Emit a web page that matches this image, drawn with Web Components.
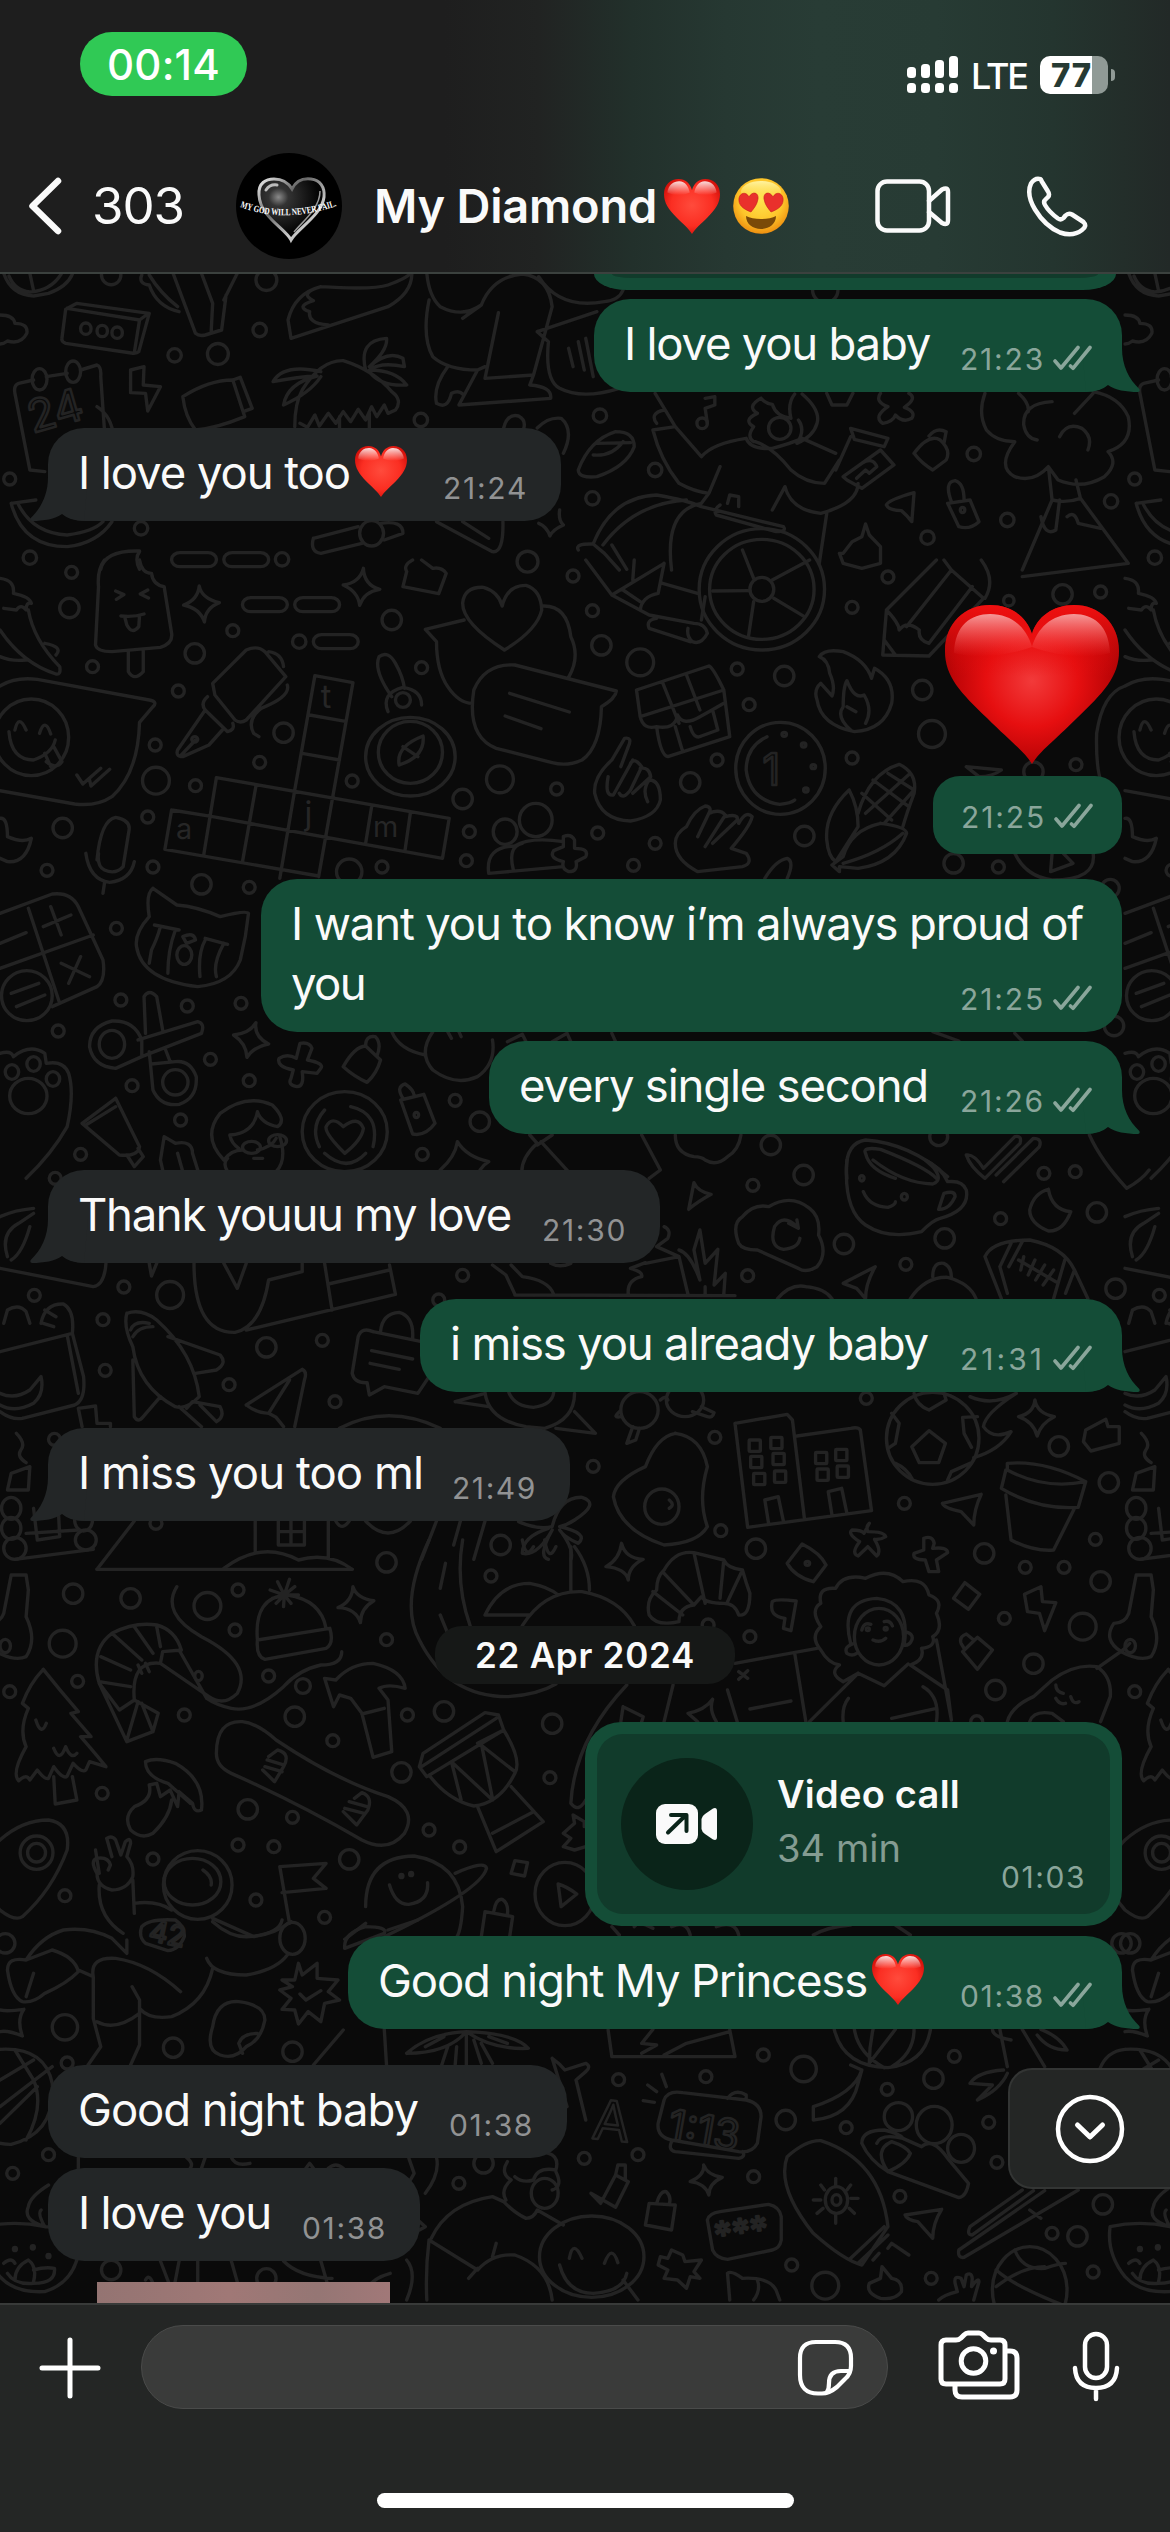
<!DOCTYPE html>
<html lang="en">
<head>
<meta charset="utf-8">
<title>Chat</title>
<style>
html,body{margin:0;padding:0;background:#0a0a0a}
body{width:1170px;height:2532px;overflow:hidden;font-family:Inter,"Liberation Sans",sans-serif}
</style>
</head>
<body>
<chat-screen></chat-screen>
<script>
const define = (name, html, setup) => {
  const t = document.createElement('template');
  t.innerHTML = html;
  customElements.define(name, class extends HTMLElement {
    constructor() {
      super();
      this.attachShadow({mode: 'open'}).appendChild(t.content.cloneNode(true));
    }
    connectedCallback() { if (setup) setup(this, this.shadowRoot); }
  });
};

/* Text run tracked so that it spans a given advance width */
define('fit-text', `<style>:host{display:inline-block;white-space:nowrap}span{white-space:pre}</style><span><slot></slot></span>`, (el, root) => {
  const s = root.querySelector('span'), w = +el.getAttribute('w');
  if (!w) return;
  s.style.letterSpacing = '0px';
  const n = el.textContent.length, cur = s.getBoundingClientRect().width;
  if (cur) s.style.letterSpacing = ((w - cur) / n) + 'px';
});

define('heart-emoji', `<style>:host{display:inline-block;width:52px;height:51px}svg{display:block;width:100%;height:100%}</style>
<svg viewBox="0 0 100 98" preserveAspectRatio="none" role="img" aria-label="heart">
<defs>
<radialGradient id="g" cx=".5" cy=".48" r=".6"><stop offset="0" stop-color="#ff4b3c"/><stop offset=".62" stop-color="#fb2e22"/><stop offset="1" stop-color="#cf0d08"/></radialGradient>
<linearGradient id="h" x1="0" y1="0" x2="0" y2="1"><stop offset="0" stop-color="#fff" stop-opacity=".85"/><stop offset="1" stop-color="#fff" stop-opacity="0"/></linearGradient></defs>
<path fill="url(#g)" d="M50 98C44 88 34 80 22 68C8 54 0 42 0 27C0 10 12 0 26 0C38 0 47 8 50 20C53 8 62 0 74 0C88 0 100 10 100 27C100 42 92 54 78 68C66 80 56 88 50 98Z"/>
<path fill="url(#h)" d="M6 24C8 10 17 4 27 4C38 4 44 14 46 24C34 30 18 30 6 24ZM54 24C56 14 62 4 73 4C83 4 92 10 94 24C82 30 66 30 54 24Z"/>
</svg>`);

define('big-heart', `<style>:host{display:block;width:174px;height:159px}svg{display:block}</style>
<svg width="174" height="159" viewBox="0 0 174 159" role="img" aria-label="heart">
<defs><radialGradient id="g" cx="87" cy="76" r="92" gradientUnits="userSpaceOnUse"><stop offset="0" stop-color="#f23a3a"/><stop offset=".5" stop-color="#e60f10"/><stop offset=".85" stop-color="#bd0507"/><stop offset="1" stop-color="#a00304"/></radialGradient>
<linearGradient id="t" x1="0" y1="0" x2="0" y2="1"><stop offset="0" stop-color="#f01010"/><stop offset=".45" stop-color="#e80e0e" stop-opacity="0"/></linearGradient>
<linearGradient id="h" x1="0" y1="0" x2="0" y2="1"><stop offset="0" stop-color="#f5a0a0" stop-opacity=".95"/><stop offset="1" stop-color="#f55" stop-opacity="0"/></linearGradient></defs>
<path id="p" fill="url(#g)" d="M87 159C78 145 66 137 42 113C16 88 0 72 0 46C0 18 20 0 45 0C66 0 82 12 87 29C92 12 108 0 129 0C154 0 174 18 174 46C174 72 158 88 132 113C108 137 96 145 87 159Z"/>
<path fill="url(#t)" d="M87 159C78 145 66 137 42 113C16 88 0 72 0 46C0 18 20 0 45 0C66 0 82 12 87 29C92 12 108 0 129 0C154 0 174 18 174 46C174 72 158 88 132 113C108 137 96 145 87 159Z"/>
<path fill="url(#h)" d="M9 48C10 20 26 9 45 9C68 9 82 24 87 42C92 24 106 9 129 9C148 9 164 20 165 48C140 55 110 50 87 42C64 50 34 55 9 48Z"/></svg>`);

define('love-face', `<style>:host{display:block;width:56px;height:56px}svg{display:block}</style>
<svg width="56" height="56" viewBox="0 0 56 56" role="img" aria-label="smiling face with heart eyes">
<defs><radialGradient id="f" cx=".5" cy=".4" r=".6"><stop offset="0" stop-color="#ffe34d"/><stop offset=".65" stop-color="#fdc52a"/><stop offset="1" stop-color="#ee8f10"/></radialGradient>
<linearGradient id="s" x1="0" y1="0" x2="0" y2="1"><stop offset="0" stop-color="#fff3a0"/><stop offset="1" stop-color="#ffe34d" stop-opacity="0"/></linearGradient></defs>
<circle cx="28" cy="28" r="27.8" fill="url(#f)"/><ellipse cx="28" cy="14" rx="20" ry="11" fill="url(#s)"/>
<path fill="#e9302c" stroke="#c41d1d" stroke-width=".6" d="M18 34C10 31 5 27 6 20C7 15 13 13 16 19C19 13 26 14 25 21C24 27 21 30 18 34ZM38 34C35 30 32 27 31 21C30 14 37 13 40 19C43 13 49 15 50 20C51 27 46 31 38 34Z"/>
<path fill="#7a4a08" d="M13 38C20 42 36 42 43 38C43 46 36 51 28 51C20 51 13 46 13 38Z"/></svg>`);

define('read-ticks', `<style>:host{display:block;width:39px;height:26px}svg{display:block}</style>
<svg width="39" height="26" viewBox="0 0 39 26" fill="none" stroke="#8aa69b" stroke-width="3.6" stroke-linecap="round" stroke-linejoin="round"><path d="M2 16L8 23L25 2.5M17.5 21L20 23.3L37 2.5"/></svg>`);

define('time-stamp', `<style>:host{display:flex;align-items:flex-end;gap:8px;height:30px;font-size:30px;line-height:30px;color:#919293}
:host([sent]){color:#8aa69b}read-ticks{display:none;margin-bottom:3px}:host([sent]) read-ticks{display:block}</style>
<fit-text id="f"></fit-text><read-ticks></read-ticks>`, (el, root) => {
  const old = root.getElementById('f'), f = document.createElement('fit-text');
  f.textContent = el.getAttribute('value');
  f.setAttribute('w', el.getAttribute('w') || '85');
  old.replaceWith(f);
});

define('chat-bubble', `<style>
:host{display:block;flex:none;box-sizing:border-box;position:relative;isolation:isolate;align-self:flex-start;margin-left:48px;background:#232627;color:#fafafa;border-radius:36px;padding:14.5px 33px 18.5px 30px;font-size:45.5px;line-height:60px;--c:#232627;margin-top:36px}
:host([sent]){align-self:flex-end;margin-left:0;margin-right:48px;background:#144d37;--c:#144d37;padding-right:30px}
:host([near]){margin-top:9px}
.row{display:flex;justify-content:space-between;align-items:flex-end}
.body{display:flex;align-items:center;flex:1 1 0;min-width:0}
:host([lines]) .body{flex-direction:column;align-items:flex-start}
.tail{display:none;position:absolute;z-index:-1;bottom:0;right:-18px;width:58px;height:44px;fill:var(--c)}
:host([tail]) .tail{display:block}
:host(:not([sent])) .tail{right:auto;left:-18px;transform:scaleX(-1)}
</style><svg class="tail" viewBox="-40 -44 58 44"><path d="M-40-44H0C0-26 7-13 17.300-3Q18.500-0.500 16 0C4 0-7-2-14-7Q-22 0-36 0Z"/></svg>
<div class="row"><div class="body"><slot></slot></div><time-stamp></time-stamp></div>`, (el, root) => {
  el.style.width = el.getAttribute('w') + 'px';
  const t = document.createElement('time-stamp');
  t.setAttribute('value', el.getAttribute('time'));
  if (el.hasAttribute('sent')) t.setAttribute('sent', '');
  root.querySelector('time-stamp').replaceWith(t);
});

define('time-pill', `<style>:host{display:flex;box-sizing:border-box;flex:none;align-self:flex-end;margin:12px 48px 0 0;width:189px;height:78px;border-radius:27px;background:#144d37;padding:26px 0 0 28px}</style><time-stamp value="21:25" sent></time-stamp>`);

define('date-chip', `<style>:host{display:flex;flex:none;align-self:center;align-items:center;justify-content:center;width:300px;height:58px;margin-top:105px;border-radius:27px;background:#161817;color:#fafafa;font-size:35px;font-weight:600}</style><slot></slot>`);

define('call-card', `<style>
:host{display:flex;flex:none;box-sizing:border-box;align-self:flex-end;width:537px;height:204px;margin:38px 48px 0 0;background:#144d37;border-radius:36px;padding:12px}
.in{display:flex;flex:1;background:#113b2b;border-radius:26px;align-items:center;padding-left:24px}
.c{width:132px;height:132px;border-radius:50%;background:#0a2419;display:flex;align-items:center;justify-content:center}
.t{margin-left:24px;display:flex;flex-direction:column;align-self:flex-start;padding-top:33px;gap:0}
.a{font-size:38px;line-height:54px;font-weight:600;color:#fafafa}.b{font-size:38px;line-height:54px;color:#849c92}
time-stamp{align-self:flex-end;margin:0 24px 22px auto;}
</style><div class="in"><div class="c"><svg width="62" height="42" viewBox="0 0 62 42"><rect x="0" y="1" width="42" height="40" rx="9" fill="#fafafa"/><path d="M45.500 16Q46 13 49 11L57 5.500Q61 4 61 8V34Q61 38 57 36.500L49 31Q46 29 45.500 26Z" fill="#fafafa"/><path d="M12 29.500L29.500 12.500M15 12H30.500V28" fill="none" stroke="#0a2419" stroke-width="4" stroke-linecap="round" stroke-linejoin="round"/></svg></div>
<div class="t"><div class="a"><fit-text w="183">Video call</fit-text></div><div class="b"><fit-text w="124">34 min</fit-text></div></div><time-stamp value="01:03" sent></time-stamp></div>`, (el, root) => {
  root.querySelector('time-stamp').shadowRoot.querySelector('read-ticks').remove();
});

define('scroll-down', `<style>:host{position:absolute;right:0;top:1794px;width:162px;height:121px;box-sizing:border-box;background:#242625;border:2px solid #333534;border-right:0;border-radius:24px 0 0 24px;display:flex;align-items:center;padding-left:45px}</style>
<svg width="70" height="70" viewBox="0 0 70 70" fill="none" stroke="#fff" stroke-linecap="round" stroke-linejoin="round"><circle cx="35" cy="35" r="32" stroke-width="4.500"/><path d="M22.500 31L35 43L47.500 31" stroke-width="5"/></svg>`);

define('status-bar', `<style>
:host{display:flex;align-items:flex-start;height:153px;box-sizing:border-box;padding-left:80px;color:#fff}
.clock{margin-top:32px;width:167px;height:64px;border-radius:32px;background:#30c955;display:flex;align-items:center;justify-content:center;font-size:42px;font-weight:500}
.r{margin:55px 0 0 660px;display:flex;align-items:center;height:39px}
.bars{display:block}.lte{font-size:36px;margin:3px 0 0 13px;line-height:36px;font-weight:500}
.bat{margin-left:13px;width:68px;height:38px;border-radius:10px;background:linear-gradient(90deg,#fff 52px,#909a96 52px);color:#263a33;font-size:33px;font-weight:800;display:flex;align-items:center;padding-left:11px;box-sizing:border-box}
.nub{width:4px;height:12px;margin-left:3px;background:#909a96;border-radius:0 4px 4px 0}
</style><div class="clock"><fit-text w="113">00:14</fit-text></div>
<div class="r"><svg class="bars" width="51" height="39" viewBox="0 0 51 39" fill="#fff"><rect x="0" y="12" width="9" height="11" rx="3.500"/><rect x="14" y="9" width="9" height="14" rx="3.500"/><rect x="28" y="5" width="9" height="18" rx="3.500"/><rect x="42" y="1" width="9" height="22" rx="3.500"/><rect x="0" y="28" width="9" height="10" rx="3.500"/><rect x="14" y="28" width="9" height="10" rx="3.500"/><rect x="28" y="28" width="9" height="10" rx="3.500"/><rect x="42" y="28" width="9" height="10" rx="3.500"/></svg>
<div class="lte"><fit-text w="56">LTE</fit-text></div><div class="bat"><fit-text w="41">77</fit-text></div><div class="nub"></div></div>`);

define('chat-avatar', `<style>:host{display:block;width:106px;height:106px}svg{display:block}text{font:bold 9.500px "Liberation Serif",serif;fill:#fff}</style>
<svg width="106" height="106" viewBox="0 0 106 106"><defs><radialGradient id="r" cx=".3" cy=".3" r=".6"><stop offset="0" stop-color="#8a8a8a"/><stop offset=".25" stop-color="#333"/><stop offset="1" stop-color="#050505"/></radialGradient>
<linearGradient id="l" x1="0" y1="0" x2="1" y2="1"><stop offset="0" stop-color="#eee"/><stop offset=".35" stop-color="#666"/><stop offset=".7" stop-color="#ccc"/><stop offset="1" stop-color="#999"/></linearGradient><path id="c" d="M4 54Q50 72 106 51"/></defs>
<circle cx="53" cy="53" r="53" fill="#000"/>
<path d="M55 87C50 76 24 64 23 42C22 30 30 26 38 26C47 26 53 31 56 36C60 28 67 25 75 26C84 27 89 34 88 44C86 62 61 76 55 87Z" fill="url(#r)" stroke="url(#l)" stroke-width="3"/>
<path d="M84 38C84 55 68 67 58 79" fill="none" stroke="#999" stroke-width="1.500"/><path d="M30 37Q34 31 41 32" fill="none" stroke="#bbb" stroke-width="3" stroke-linecap="round"/>
<text textLength="99" lengthAdjust="spacingAndGlyphs"><textPath href="#c" textLength="99" lengthAdjust="spacingAndGlyphs">MY GOD WILL NEVER FAIL.</textPath></text></svg>`);

define('chat-header', `<style>
:host{display:block;box-sizing:border-box;height:274px;border-bottom:2px solid #3b413e;background:linear-gradient(90deg,#1e1e1e 0,#1e1e1e 38%,#212322 46%,#22302b 54%,#263832 62%,#283c35 70%,#273b34 80%,#24352f 90%,#232e2a 96%,#222927 100%)}
.row{display:flex;align-items:center;height:106px;color:#fafafa}
.n{font-size:51px;line-height:56px;margin-left:30px;width:92px}
chat-avatar{margin-left:52px}
.name{font-size:47px;font-weight:600;line-height:56px;margin-left:32px}
heart-emoji{width:56px;height:55px;margin-left:7px}love-face{margin-left:13px}
.v{margin-left:85px}.p{margin-left:74px}
svg{display:block;fill:none;stroke:#fafafa;stroke-linejoin:round;stroke-linecap:round}
</style><status-bar></status-bar><div class="row">
<svg style="margin-left:28px" width="34" height="58" viewBox="0 0 34 58" stroke-width="6.500"><path d="M30 4L4.500 29L30 54"/></svg>
<div class="n"><fit-text w="92">303</fit-text></div><chat-avatar></chat-avatar>
<div class="name"><fit-text w="283">My Diamond</fit-text></div><heart-emoji></heart-emoji><love-face></love-face>
<svg class="v" width="78" height="54" viewBox="0 0 78 54" stroke-width="4.500"><rect x="3.500" y="2.500" width="51.500" height="49" rx="9.500"/><path d="M55 22L68 10.500Q74 7.500 74 13V41Q74 47 68 44L55 33"/></svg>
<svg class="p" width="62" height="62" viewBox="0 0 62 62" stroke-width="4.500"><path d="M14.500 4.200Q9 2.500 5 8.500Q0 19 9 34.500Q19 51 34 57.500Q47 62 56 55Q61.500 51 57.500 47L46 39.500Q42.500 37.500 39.500 40.500L37.500 43Q35 45.500 32 43.500Q23 37 19 30Q17 26.500 19.500 24.500L22 22Q24 19.500 22 16.500L15.500 6Q15 4.500 14.500 4.200Z"/></svg></div>`);

define('message-composer', `<style>
:host{display:flex;align-items:flex-start;box-sizing:border-box;height:229px;background:#242625;border-top:2px solid #383a39;position:relative}
svg{display:block;fill:none;stroke:#fff;stroke-linecap:round;stroke-linejoin:round;flex:none}
.plus{margin:32px 0 0 39px}.field{box-sizing:border-box;margin:20px 0 0 40px;width:747px;height:84px;border-radius:42px;border:1.500px solid #4a4b4a;background:#3a3b3a;display:flex;justify-content:flex-end;align-items:center;padding-right:33px}
.cam{margin:24px 0 0 50px}.mic{margin:25px 0 0 51px}
.home{position:absolute;left:377px;top:188px;width:417px;height:15px;border-radius:8px;background:#fff}
</style>
<svg class="plus" width="62" height="62" viewBox="0 0 62 62" stroke-width="5"><path d="M31 3V59M3 31H59"/></svg>
<div class="field"><svg width="57" height="57" viewBox="0 0 57 57" stroke-width="4.200"><path d="M19 3H38Q54 3 54 19V27Q54 35 48 40L40 48Q32 54.500 25 54.500H21Q3 54.500 3 36V19Q3 3 19 3Z"/><path d="M53 32H44Q32 32 32 44Q32 50 30 53"/></svg></div>
<svg class="cam" width="82" height="72" viewBox="0 0 82 72" stroke-width="5"><path d="M8 11H18Q21 11 23 9L26 6Q28 4 30 4H41Q43 4 45 6L48 9Q50 11 53 11H62Q67 11 67 16V50Q67 55 62 55H8Q3 55 3 50V16Q3 11 8 11Z"/><circle cx="35.500" cy="32" r="12.300"/><circle cx="55.500" cy="22" r="3.500" fill="#fff" stroke="none"/><path stroke-linecap="butt" d="M68 22H72Q79 22 79 29V61Q79 68 72 68H24Q17 68 17 61V56"/></svg>
<svg class="mic" width="50" height="72" viewBox="0 0 50 72" stroke-width="4.500"><rect x="14" y="4" width="22" height="44" rx="11"/><path d="M4 38Q5 58 25 58Q45 58 46 38M25 58V69"/></svg>
<div class="home"></div>`);

/* Doodle wallpaper: hand-drawn line art in horizontal bands, each band on its own stretched grid, repeated every 1125px */
const bands = [
{y:270, e:[[115,176,7,17],[137,183,7,17],[157,188,7,17],[53,328,10,32],[98,305,10,32],[941,460,7,16],[1045,475,15,33],[498,790,16,38],[1290,720,3,8]],
 r:[[230,848,60,42],[300,848,60,42]], t:[['24',44,490,62,1.2,-16]],
 d:[[357,30,14],[348,180,9],[234,256,9],[292,252,14],[149,15,13],[804,437,9],[564,450,9],[1305,552,9],[878,600,9],[794,685,9],[189,775,9],[13,627,8],[40,863,9],[378,868,9],[707,875,14],[1489,694,9],[1350,750,9],[1243,803,9],[1106,60,17]],
 p:`M5 10Q15 75 45 78L65 70Q90 50 97 12M12 18Q20 62 40 66Q68 62 82 12M40 10L45 62
M88 118L103 100L200 130L186 245Q183 252 176 249L88 220Q82 215 83 205ZM90 115L187 150L198 132M187 150L180 248
M0 135Q18 135 20 160Q38 160 36 190Q28 225 10 213Q5 222 0 222
M232 10L262 190Q267 200 275 195L297 180L303 75M270 10L285 100L283 185M190 15Q185 40 200 45Q210 110 240 125M200 15Q215 70 238 110M318 10L300 90
M390 205L386 150Q395 70 430 50Q500 60 520 45Q545 25 550 10M390 205L520 110Q552 70 552 10M430 50Q400 70 420 92Q395 110 415 125Q412 160 440 165
M572 10Q575 80 590 110Q620 145 645 105Q660 20 700 12Q735 20 740 110L715 315L650 325L668 128M645 105L620 145M575 90Q565 200 580 260Q600 300 640 300L650 290M715 315L710 345Q740 350 738 385L615 405L640 300M600 290Q580 350 585 400Q600 420 605 370Q615 360 620 372M722 20Q750 120 810 95Q830 90 835 60M720 185L800 125M720 185L735 215Q730 330 750 355Q780 390 830 355M762 235L768 290M775 215L783 300M785 205L795 320
M395 470Q395 400 405 360Q430 270 460 272Q500 300 525 365Q540 390 530 420L520 430L515 405L505 440L498 410L490 450L480 418L470 455L460 425L450 460L440 430L428 468L422 435L412 472L402 460M490 300Q480 210 518 205Q520 240 495 290Q520 240 540 265L542 290Q510 275 495 300Q530 300 545 345Q510 350 495 305M430 305Q380 280 366 335Q400 320 425 318Q385 340 380 405Q415 370 430 320M455 440V474M495 430V474
M20 370Q18 345 25 340L45 330M62 320L90 310M108 300L130 285Q136 290 135 320L140 480M20 370L40 600L60 605M130 410Q150 440 152 500
M175 300L193 290L192 345L215 350L198 423L195 370L175 368Z
M245 380Q280 330 312 330L328 440Q290 475 262 480Q248 440 245 380ZM312 330L322 322L338 415L326 425M945 385L958 380V405L945 415L948 460
M1108 370L1115 405H1135L1143 370M1180 370Q1172 395 1190 410Q1170 440 1183 460Q1197 455 1200 435Q1210 460 1222 445Q1228 425 1212 412Q1230 385 1218 370
M878 370L905 470L940 560Q955 520 1000 505Q1005 540 1035 535Q1060 520 1075 505L1120 550M905 470L875 480Q885 570 910 640Q930 665 950 670L965 590M950 670L940 700M1012 515Q1035 530 1060 600Q1080 640 1105 640L1125 570M1052 650Q1060 720 1100 730Q1150 700 1150 640M1052 650L1035 720M1020 385Q1000 410 1015 430Q995 450 1010 470Q1000 500 1010 515M1020 385Q1025 400 1035 403Q1040 440 1060 445Q1055 400 1065 372M1075 372Q1100 420 1095 460Q1090 500 1068 520Q1080 480 1070 450M880 460Q870 430 890 420
M1130 620L1180 540L1198 585L1155 655L1135 630ZM1140 475L1190 505L1185 530L1145 508ZM1140 500L1120 600M1155 580Q1170 560 1175 590L1165 610L1160 600L1148 625
M1225 550Q1245 490 1260 510Q1275 540 1268 570L1250 600Q1235 580 1225 550M1245 498Q1255 470 1268 485L1265 520
M1320 370Q1310 430 1322 480Q1335 515 1360 515Q1335 590 1360 620Q1385 640 1405 590L1418 630Q1450 660 1480 620Q1500 580 1485 545Q1520 520 1512 440Q1500 380 1465 365M1410 395Q1370 400 1372 465Q1375 505 1390 510M1365 370Q1380 400 1378 425M1465 370L1440 430M1420 500Q1430 455 1450 475Q1465 500 1458 540M1405 590L1410 690Q1430 700 1448 685L1442 630M1410 690L1370 900M1448 685L1512 880L1370 920M1395 740Q1400 800 1415 780L1420 690M1430 740Q1440 720 1445 760L1475 775
M1270 700L1300 690L1312 755Q1300 780 1285 770ZM1275 695Q1265 635 1280 632Q1292 640 1292 690M1188 705Q1190 690 1225 668L1222 755Q1215 735 1208 722Q1190 720 1188 705
M775 840Q770 820 795 822L810 850L830 900M795 822Q820 680 880 675Q920 690 940 710L1050 770Q1055 785 1040 785L960 735Q955 720 965 705M808 825Q850 700 920 690M900 900Q890 720 940 700M820 825L840 898M975 700L978 675L990 680V710M1108 730L1098 880
M775 600Q790 510 825 485Q850 485 850 530Q840 590 800 620Q775 625 775 600M800 520L845 518M795 555Q820 560 835 515
M675 474Q680 430 695 438Q705 450 702 474M720 474Q735 440 752 445Q770 480 755 550M15 700L48 690M15 700Q30 830 90 830Q130 820 150 755M25 705Q45 790 90 795Q125 785 138 755
M420 805L480 770M430 850L485 820M420 805Q415 845 430 850M510 760Q540 750 540 790L515 810M585 755L660 845Q675 850 674 755M620 755L655 805M750 720Q748 750 755 765Q740 780 737 798Q733 770 722 760
M187 845Q180 865 187 898M187 843Q140 840 135 898M1130 850L1142 815L1155 800L1160 762L1165 795L1180 830V880L1155 895L1130 880L1125 850Z`},
{y:560, e:[[1021,88,84,182],[1021,88,70,150],[1021,88,16,36],[42,532,50,115],[261,538,4,8],[550,590,60,118],[550,577,43,93],[540,420,10,22],[1046,625,60,138],[1051,523,3,6],[1077,555,3,6],[1090,620,3,6],[1080,690,3,6],[677,815,16,38],[718,780,22,50]],
 r:[[325,113,60,42],[395,113,60,42],[420,224,60,42]],
 t:[['t',430,445,45],['j',408,795,45],['m',500,830,40],['a',236,838,40],['1',1022,675,60,1.2,0]],
 d:[[96,37,8],[93,144,13],[124,320,8],[261,280,13],[312,212,8],[239,393,8],[525,180,13],[401,245,9],[565,323,8],[380,518,13],[208,555,8],[348,607,8],[209,662,18],[262,677,8],[472,663,8],[198,771,8],[84,804,13],[63,931,8],[205,921,8],[468,935,17],[512,921,8],[768,48,8],[794,152,8],[806,256,13],[858,307,18],[988,327,8],[1004,434,8],[1051,348,13],[1142,142,8],[1190,51,8],[1236,390,13],[1249,522,18],[1142,594,8],[961,600,8],[925,667,13],[746,687,8],[670,658,18],[620,717,13],[629,815,8],[625,902,8],[801,819,8],[878,850,8],[849,916,8],[1078,828,13],[1352,122,7],[1424,103,13],[1475,96,8],[1385,635,13],[1442,614,8],[1278,910,13],[1338,921,8]],
 p:`M955 93L1005 92M1035 60L1085 0M1010 55L995-30M1010 125L1003 230M1037 115L1078 170M785 0L820 105L870 165L930 190M890 10L820 105M850 0L848 60M890 10L882 100Q860 110 858 150M888 70L935 100M880 175Q865 180 870 205L925 245M835 90L858 125M945 110L940 180M930 190Q945 190 948 220Q940 255 928 245Q920 230 922 205
M140 0Q130 30 132 80L128 255Q130 275 150 275L215 262Q232 250 230 220L220 80Q205 75 203 40Q190 40 187 0M172 272V335Q180 365 192 335V268M155 93L166 104L156 118M198 90L188 102L199 114M162 168Q180 172 193 162M167 170L170 195Q177 225 186 200L187 167
M267 78Q270 115 294 128Q275 145 274 186Q268 145 246 135Q265 120 267 78ZM487 25Q488 75 509 88Q488 95 482 136Q480 95 460 75Q482 68 487 25ZM545 35Q540 15 553 0M545 35L540 80L588 101L598 40Q592 20 580 25L565 0
M676 270Q620 190 620 130Q622 80 648 82Q668 95 673 138Q680 75 705 76Q725 90 726 150Q720 210 676 270ZM622 180L570 208L585 245Q585 330 600 380Q615 430 633 430M727 138Q760 135 765 230Q778 290 762 352M635 390Q650 310 690 315L826 393Q825 415 806 440Q805 560 780 600Q760 620 740 608L665 565Q625 530 635 390ZM683 400L763 456M677 468L725 506
M0 55Q20 60 18 100Q40 110 42 130Q35 125 35 150Q28 130 22 150L5 145M38 150Q45 240 80 320Q82 345 75 342Q30 310 0 210M0 290Q15 305 35 300M60 250Q85 260 75 285
M0 378Q20 350 50 358L200 420Q212 425 205 440L187 487Q185 640 150 710Q130 740 100 732L0 692M-20 700Q-40 680-38 520Q-30 400 0 378M12 515Q15 600 45 600Q70 580 74 540M20 510Q25 460 35 510M53 520Q60 470 68 522M60 580L68 620M72 560L83 605Q75 630 62 605M103 645L111 672L135 625M120 660L122 678L147 628
M285 370L330 270Q345 255 355 275L383 350L330 480Q322 492 315 480L288 405ZM360 275Q378 280 380 320M385 375Q390 410 350 445Q330 480 340 520L347 530M278 410Q268 430 275 450L305 515Q315 510 312 490M275 450L238 570Q235 590 245 590L280 555L298 510M243 585L262 540
M422 347L473 368L427 950M422 347L395 690L375 955M415 465L463 484M405 580L455 600M290 653L602 775L593 895L285 770M290 653L273 885M230 750L285 770M230 750L221 868L427 948M343 678L325 905M498 740L490 850M550 758L543 868
M520 455Q510 400 540 382Q565 390 565 435M525 410Q500 330 508 290Q520 270 530 310Q540 350 542 385M535 615Q530 560 567 528Q570 590 535 615M540 560L560 590
M853 390L950 318Q955 320 970 390L978 530L895 590Q885 585 880 500Q862 510 858 470ZM858 470L970 390M888 368L910 490M920 345L938 450M880 500Q905 510 908 465Q915 500 938 470Q955 450 970 430M925 500Q930 540 940 528L962 510L955 450M905 500L915 575
M1098 290Q1105 265 1130 275Q1160 300 1168 355L1172 325Q1200 360 1195 430Q1185 510 1145 515Q1100 495 1095 420Q1090 390 1100 370L1115 408Q1120 380 1112 340Q1110 300 1098 290M1140 510Q1120 470 1130 440Q1130 380 1135 362Q1145 420 1158 405Q1170 450 1160 490M1135 440L1147 455
M1188 150L1255 0M1215 200L1275 30L1318 115L1245 288L1183 285L1188 150Q1205 190 1205 210Q1215 180 1232 210Q1230 240 1245 250M1185 240L1200 285M1245 250L1303 80M1265 0L1275 30M1320 115Q1335 60 1315 0
M1028 530Q1000 560 1000 630Q1005 720 1045 733Q1060 730 1065 720M820 600L837 535Q848 530 842 560L832 620M820 600Q795 650 797 700Q805 780 845 783Q880 770 885 720Q885 660 870 660Q860 690 868 725M815 650Q810 710 822 705L848 600M830 700Q835 720 845 690L860 620Q850 590 845 610M848 700L872 650Q870 620 858 625
M920 800Q930 750 945 738Q955 740 950 760L935 830M950 760Q965 745 972 765L945 860M972 770Q990 760 988 780L955 850M990 790Q1000 750 1008 770Q1005 800 980 865L1000 880Q1010 910 995 920L935 935Q905 900 905 850Q905 820 920 800
M655 940Q650 860 690 858Q710 830 755 845M655 940L755 920M688 930Q680 860 700 850M755 830Q765 820 770 840V865Q790 865 785 890L772 905Q775 935 762 935Q752 925 755 905Q735 895 742 872L755 860Z
M1138 690Q1105 760 1108 840Q1110 890 1120 905L1150 800Q1150 740 1138 690M1150 760Q1165 640 1205 613Q1230 640 1225 700Q1215 760 1210 800M1180 790Q1215 800 1215 820Q1200 910 1150 925L1125 920V935L1115 915L1130 890Q1140 810 1180 790M1130 910Q1180 880 1210 820M1155 700L1195 780M1170 660L1218 740M1190 640L1225 690M1220 640L1160 760M1225 690L1185 790
M1295 620L1342 630Q1330 650 1312 650ZM0 775Q10 770 10 830Q30 850 42 835Q35 910 10 905L0 895M130 900Q135 780 155 772Q175 780 173 810L165 920Q155 945 140 930Q130 920 132 880M115 880Q120 960 147 967Q175 960 180 905M140 970L138 1000M1025 955Q1040 900 1055 895Q1065 905 1055 955M1360 880Q1375 950 1410 960Q1470 960 1465 880M1410 880L1408 935L1438 910L1425 880`},
{y:860, e:[[36,407,34,75],[247,285,10,28],[150,553,17,42],[235,667,17,38],[337,862,12,18],[372,842,12,18],[462,815,57,120],[558,765,3,8],[16,636,9,22],[45,612,9,22],[71,657,9,22],[38,708,25,53]], r:[], t:[],
 d:[[270,73,13],[334,82,8],[156,205,8],[162,420,8],[251,438,8],[323,430,8],[78,513,8],[282,598,8],[177,677,8],[334,662,8],[610,721,8],[643,785,13],[242,780,8],[108,883,8],[566,883,8],[1033,855,13],[1077,945,13],[1258,830,12],[1399,940,8],[1441,935,8],[1493,498,13],[1488,85,12]],
 p:`M0 160L70 102Q95 95 105 140L138 300Q142 360 130 380L70 440M38 145L80 430M0 325L125 225M0 250L35 218M68 140L82 225M58 200L95 165M82 310L120 350M108 290L92 370M15 400L52 370M22 440L60 405
M205 85Q195 100 200 170Q180 220 183 260Q190 360 265 380Q310 370 322 300Q330 230 333 160Q330 150 295 170Q265 140 237 135L205 85M207 195L240 210M275 235L305 253M215 200Q210 240 203 270L200 310M235 210Q225 270 225 340M275 240Q265 280 268 350M300 250Q285 310 290 350M245 230Q260 215 262 240L250 250Z
M190 540Q180 480 150 483Q120 500 120 560Q125 620 155 625L190 590ZM185 540L265 485Q275 490 270 520L190 590M195 520L193 410Q200 385 210 410L218 510M200 575L205 690Q215 740 240 733Q265 715 263 650Q255 600 235 605L203 612M222 570L228 605
M343 488Q340 530 360 552Q340 560 331 592Q330 550 313 525Q335 520 343 488ZM402 550Q415 545 418 565L412 600Q435 610 430 625L425 640L405 635Q408 680 398 680Q385 675 390 655L393 630Q370 620 374 595Q385 580 397 595Z
M460 620Q475 560 490 558L510 600Q505 640 492 667Q475 650 460 620M490 558Q490 525 503 530Q512 550 505 590M155 715L110 790L160 885Q185 890 187 860L155 715M155 740L115 795M170 885L180 920L192 890L185 865
M300 900Q270 830 295 760Q330 700 365 735Q385 780 372 800Q350 790 345 755Q340 820 308 825Q310 850 320 865M300 900Q310 870 325 870M305 935Q298 910 305 895M345 870Q365 860 370 835M375 830Q385 900 370 935M340 895L352 895
M462 880Q435 820 437 800Q445 765 460 800Q480 765 487 805Q485 840 462 880M435 750Q415 800 428 860M470 740Q510 760 500 860M435 880Q465 940 490 880M537 720L568 703L583 790Q570 830 553 822ZM540 715Q530 680 543 672Q555 690 555 708
M613 845Q625 890 655 905Q640 925 640 960M613 845Q610 890 590 930M525 515Q535 570 570 585M580 515Q560 580 580 630Q610 680 640 650Q665 610 660 540M600 515L605 535M615 515L618 530M680 545L700 523L705 545M740 545L760 520L765 545M820 520L825 545
M0 580Q15 570 18 590Q40 550 60 580L62 610Q85 600 92 640Q100 700 90 800Q70 880 35 955M1135 955Q1130 850 1160 840Q1220 850 1270 950M1160 880Q1155 860 1180 868Q1240 920 1255 955M1160 880Q1165 930 1200 955
M1295 885Q1305 880 1318 925L1360 830Q1370 825 1367 850L1320 955Q1300 920 1295 885M1335 945L1385 835Q1397 835 1393 860L1345 965M700 955Q695 900 720 850L710 825M725 845L770 955M720 855L740 825M860 825L885 930L870 955M905 825Q905 880 930 890Q940 890 945 900Q960 920 975 890Q990 870 993 825
M1460 825Q1475 900 1510 985Q1530 960 1540 930M1360 520L1370 543M1250 515L1285 543M215 900L220 830L235 850Q258 840 258 880L265 930M215 900L220 950M238 880L245 935`},
{y:1160, e:[[1155,55,3,8],[1212,110,4,10],[857,750,25,55],[918,720,25,50],[887,1040,23,53],[1250,835,62,138],[15,1045,13,33],[15,1105,13,33],[20,1165,15,33],[112,1080,12,33],[115,1140,14,30]],
 r:[[1004,840,15,34],[1033,832,15,34],[1006,889,15,34],[1036,880,15,34],[1010,940,15,34],[1038,933,15,34],[1093,877,15,34],[1120,868,15,34],[1095,927,15,34],[1122,918,15,34]], t:[],
 d:[[74,55,8],[228,405,18],[166,381,8],[46,406,8],[138,479,8],[357,562,13],[432,541,8],[141,631,8],[307,674,8],[449,725,8],[620,346,8],[1002,347,8],[1131,252,13],[1214,313,8],[1266,235,13],[1341,176,8],[1470,157,13],[1009,76,8],[1495,386,13],[1161,715,8],[958,832,8],[795,919,8],[966,1112,8],[1013,1166,13],[1212,1030,8],[1419,859,13],[1486,967,13],[1468,1138,8],[1319,1180,13],[671,1155,13],[73,838,8],[588,420,8],[209,1090,8]],
 p:`M1135 0Q1130 150 1160 195Q1190 240 1235 215Q1250 180 1260 175Q1300 150 1295 90Q1290 60 1270 65Q1260 20 1240 0M1170 0Q1210 70 1250 72Q1265 60 1250 20L1240 0M1265 100Q1280 90 1280 110Q1272 150 1258 148ZM1157 95Q1165 140 1190 142Q1200 135 1200 125
M1405 88Q1410 150 1435 155Q1425 215 1405 213Q1380 190 1380 150Q1385 100 1405 88M930 68Q935 95 953 103Q935 125 923 148Z
M990 250Q980 190 995 170Q1010 130 1030 140Q1060 100 1085 145Q1100 170 1097 225Q1110 280 1095 320Q1080 340 1070 325L1015 270Q995 270 990 250M1068 200Q1050 160 1038 200Q1030 260 1050 268Q1070 265 1072 235M1057 190L1070 205L1068 180
M1320 290Q1330 240 1380 240Q1425 260 1440 330L1458 416M1320 290L1342 416M1355 250L1340 320L1350 400M1370 245L1352 320M1365 300L1415 365M1372 290L1368 330M1387 300L1378 345M1400 315L1388 360M1412 330L1398 375M1440 330L1428 400M1427 300L1412 416
M890 200Q900 210 895 235L880 260L910 290L922 403M910 270Q925 280 938 360L930 270L938 210L945 310L962 268L957 375L972 340L970 403M945 380V403M865 308L845 325Q862 335 860 350Q840 360 842 403M910 290L865 310M690 405L985 407M660 315L678 345L690 403M685 315L700 350Q735 360 742 403M738 310Q750 325 765 310
M260 310Q260 520 315 517Q350 500 360 360L405 335V310M300 310L318 385L330 310M330 510L530 403L522 315M440 372L522 330M435 310L445 450M200 310L203 348L210 310M0 325L125 380Q140 375 142 310M0 170Q20 150 45 145M10 290Q0 220 25 190L45 160M15 300Q30 280 40 200
M170 460Q190 445 210 480Q260 580 267 710Q250 750 235 740Q185 680 178 560Q165 500 170 460M175 510Q180 480 200 490M178 530Q185 500 205 500M225 530L295 585Q305 610 290 630L262 640M178 600L180 770Q185 790 192 770L215 710M240 740L270 800M250 745L258 725L295 740Q302 770 290 785L268 735
M5 490L10 450Q25 430 35 455L40 490M55 490Q60 430 85 432Q100 450 97 520L0 575M97 520L112 650Q115 720 100 735L30 775M90 525L105 700M60 450L75 470M58 490L72 500M0 700Q20 720 40 690L55 650Q60 700 45 730Q20 760 0 735M30 775Q15 780 0 755
M500 515Q485 500 480 530L472 640Q475 670 492 668L495 705L515 680L560 700L575 650M500 515L565 545M510 515Q512 460 535 457Q555 470 553 535M498 572L553 597M496 610L535 628M330 735L405 628Q412 635 408 660L395 800M330 735Q345 760 360 760L388 660M360 760L370 772L380 800M105 745L128 738L130 790H148V800M105 745L110 800
M455 805Q520 730 590 805M610 725L650 700M610 725L655 740M650 698Q655 780 705 800L730 805Q770 780 770 700M682 698Q690 740 715 742Q740 735 742 698M770 755L798 820L745 805M885 720Q892 705 895 720M830 755Q820 775 832 770M848 800L840 850L852 840L857 805M940 740L957 758Q955 775 948 770L928 755
M905 820Q940 830 948 920Q935 1020 948 1100Q935 1150 890 1155Q830 1110 822 1010Q825 960 865 920Q880 830 905 820M897 1020Q905 1035 897 1045M985 790L1055 763L1062 780L1078 1075M985 790L1002 1102L1168 1052L1153 810Q1150 800 1140 805L1068 828M1030 1090L1025 1020L1043 1010L1050 1085M1115 1065L1110 995L1128 985L1135 1060
M1245 812L1267 850L1258 908H1232L1222 860ZM1225 700Q1228 735 1245 750L1268 720L1265 700M1195 760L1205 790L1200 850L1190 865M1310 770L1290 772L1292 820L1302 862M1200 910Q1215 925 1222 955M1300 910L1275 935L1270 960M1300 710Q1330 740 1362 700Q1320 760 1318 800Q1330 840 1355 815Q1340 870 1305 893M1387 720Q1390 760 1413 770Q1395 790 1390 828Q1385 785 1365 770Q1385 760 1387 720ZM1455 810L1482 778L1485 800H1500V850L1462 873L1452 845Z
M1350 910Q1400 900 1455 965Q1400 990 1350 930ZM1348 930L1342 985Q1390 1050 1445 1042L1455 965M1348 1005L1355 1140Q1385 1175 1412 1170L1440 1045M1263 1030L1315 1003Q1305 1050 1305 1095L1288 1055Q1265 1045 1263 1030
M1165 1090Q1160 1100 1163 1115Q1185 1115 1187 1130Q1180 1140 1172 1138Q1182 1175 1175 1188L1163 1160L1150 1188Q1140 1180 1152 1145Q1135 1120 1142 1110Q1155 1110 1158 1120Z
M1238 1135Q1250 1125 1252 1150L1250 1165Q1270 1160 1270 1178L1255 1200L1258 1235L1245 1235L1240 1200Q1222 1200 1225 1180L1238 1170Z
M180 1083L130 1228M342 1083V1180M440 1083V1195M373 1083V1155H408V1083M390 1083V1150M373 1115H408M300 1225Q350 1140 400 1200Q440 1175 472 1228M450 1083Q458 1115 468 1083M490 1083Q520 1155 550 1083M585 1083L565 1198M617 1083L608 1155M650 1083L635 1198
M695 1085Q720 1110 740 1100Q750 1010 780 1012Q805 1030 770 1080Q760 1095 750 1100Q790 1120 775 1150Q755 1130 750 1110M735 1105Q700 1130 700 1180Q720 1190 740 1110Q720 1190 735 1198M752 1115Q770 1170 765 1198M20 1198L125 1168M35 1120L105 1110M50 1140L80 1130L78 1040M45 1045L50 1140M15 940L40 920L38 990H10ZM22 820Q35 850 28 870Q22 890 35 908
M1080 380Q1060 370 1042 416M1080 380Q1105 385 1115 416M1130 370L1173 320Q1160 370 1160 416L1148 385ZM1250 350Q1250 305 1265 310Q1275 320 1275 352M1220 416Q1240 350 1270 352Q1300 370 1308 416`},
{y:1540, e:[[406,438,10,22],[266,408,5,14],[1082,70,3,6],[1178,290,33,85],[1163,268,2,4],[1187,266,2,4],[7,318,7,20],[49,938,22,50],[49,938,12,28],[265,1035,46,103],[258,1025,38,70],[538,1008,2,5],[551,1002,2,5],[757,1062,40,95]], r:[], t:[['42',198,1200,40,1.0,12]],
 d:[[98,161,13],[175,175,13],[278,198,18],[319,150,8],[315,270,8],[518,67,13],[518,299,8],[84,311,18],[104,424,8],[13,455,8],[360,408,8],[247,525,8],[395,530,13],[546,525,8],[446,602,8],[595,514,13],[740,551,13],[538,697,13],[737,713,8],[137,760,8],[332,808,13],[392,832,8],[575,870,8],[319,915,8],[367,920,8],[205,957,8],[468,958,13],[616,921,8],[343,1080,8],[435,1132,8],[87,1067,8],[658,108,8],[1374,82,8],[1426,82,8],[1475,124,13],[1346,235,8],[1451,260,18],[1385,371,13],[1334,450,13],[1005,290,8],[949,255,8],[1309,545,8]],
 p:`M130 88H472M345 300Q340 170 385 165Q430 180 437 265M345 300Q343 350 355 358L437 325Q448 310 442 265ZM381 165L362 150M381 165L365 175M381 165L370 190M381 165L380 200M381 165L390 190M381 165L400 165M381 165L395 140M381 165L388 118M381 165L372 125
M473 140Q478 175 501 182Q483 205 483 248Q477 205 453 203Q472 185 473 140ZM833 10Q838 55 862 58Q842 80 842 120Q838 85 812 80Q830 60 833 10Z
M237 140Q215 220 270 290Q340 370 318 460Q300 500 280 470L215 370M240 330L277 475M458 335Q458 375 430 375Q400 390 380 440Q340 520 310 505Q290 495 277 475M133 430Q120 330 150 280Q180 245 210 255Q235 270 243 330L218 335L215 370Q175 360 180 480M133 425L175 440M150 280L190 360M180 260L205 340M210 260L215 320M135 350L175 390M133 430L160 510L180 480L212 520L205 575L170 605ZM185 485L170 600M190 490L205 575M185 375L190 400M195 370L200 395
M435 415L450 420Q470 370 500 370Q540 390 543 445Q520 430 508 445L520 480L525 635L500 652L485 520L470 475L455 465L447 500ZM485 522L515 505
M58 388Q40 430 30 490L38 505Q25 570 35 620Q15 700 25 722Q35 700 40 720L50 690Q60 720 65 715L72 680Q85 720 90 708L98 670Q110 700 115 690L120 665L142 680Q120 620 108 590L122 590L95 520L105 515Q80 450 58 388M72 710L74 792L103 780L97 710M48 540Q55 590 62 550M72 625Q80 670 88 620Q95 660 103 640
M195 665Q210 650 235 670Q275 720 270 810Q260 820 258 790L240 755L238 800L228 750L215 770L210 730L200 735Q205 780 180 800Q165 830 175 870Q190 900 205 880Q228 830 230 780M195 665Q195 710 225 730L255 790
M290 640Q290 540 325 545Q345 550 370 600Q450 720 520 770Q560 810 542 880Q520 940 485 900Q400 790 310 700Q290 680 290 640ZM360 650L372 630Q390 640 380 680L368 725L352 690M355 680L378 695M358 660L380 675M475 775L485 758Q500 770 493 810L478 855L460 815M462 805L488 820M468 785L492 800
M567 640L650 518L668 525L675 570L572 710L562 680ZM565 680L665 535M640 610L675 570Q700 660 690 700Q670 790 635 798Q600 780 575 705M605 665L618 780M605 665L660 780M643 612L690 695M645 610L660 775M685 740L728 845L665 935L640 800M660 880L715 815
M575 0Q535 190 562 300Q600 470 680 470Q720 465 745 432M597 70L590 145M590 225L600 280M620 0Q610 130 630 257M650 225Q670 130 710 130Q735 140 748 165M650 225H710M700 257Q730 150 780 155Q830 175 850 257M765 20V155M790 150Q790 80 770 20M700 0Q705 60 715 20M730 0Q735 70 745 20M840 435Q770 600 765 790Q775 820 785 780M902 435L890 545
M890 90Q905 30 930 38L970 60Q975 85 995 90Q1000 130 1005 160Q1005 230 990 225Q985 190 970 190Q945 190 940 170L930 195Q910 200 910 245Q880 260 870 225Q865 180 880 150Q880 110 890 90M930 38L945 190M970 60L965 175M995 90L975 185M890 100L930 195M875 155L915 225
M1055 70L1075 12Q1100 40 1107 75L1090 125Q1065 110 1055 70ZM1035 185Q1040 175 1067 183L1060 272L1050 265L1052 235Q1030 230 1035 185
M1100 330Q1085 290 1100 260Q1085 210 1100 190Q1095 140 1120 145Q1130 100 1160 115Q1190 80 1210 125Q1240 110 1245 165Q1265 180 1255 220Q1265 270 1250 290Q1255 320 1235 325M1140 310Q1125 180 1175 175Q1220 185 1212 310M1100 330Q1110 370 1125 375Q1110 400 1130 425L1150 400M1235 325Q1240 360 1220 375L1270 450L1275 540M1255 300L1275 540M1150 400L1085 545M1150 400L1185 437L1217 372M1130 545Q1128 500 1137 475M1237 440Q1260 470 1255 545M1195 535L1255 505M1145 310Q1130 320 1135 340Q1142 350 1148 340M1212 275Q1225 280 1222 300Q1218 320 1210 315M1155 270Q1158 245 1167 253M1185 245Q1193 240 1196 258M1170 300Q1180 310 1187 295
M985 370L1095 325M975 450L988 545M1065 340L1080 545M990 395L1002 415M1002 392L990 418M1005 507L1060 483M1293 128L1313 163L1298 208L1278 175ZM1373 163L1395 140L1397 185L1415 188L1400 272L1393 220L1377 215ZM1290 335L1310 292L1330 330L1310 388ZM1305 300L1295 282Q1285 290 1288 310L1292 325
M15 105H35L38 150L35 230Q50 300 35 350Q20 365-5 335Q-30 300-15 250Q0 250 5 220L15 105M1350 545Q1355 500 1385 470L1410 420Q1440 370 1470 380Q1490 410 1488 470L1475 545M1470 385L1505 330L1514 310M1415 435Q1415 455 1425 460M1415 475Q1420 495 1428 490M1435 470Q1438 495 1446 485M1380 545Q1385 510 1410 520L1425 545
M0 900Q30 840 65 840Q95 850 90 930Q70 1050 30 1130Q20 1145 0 1110Q-25 1050-15 960Q-10 920 0 900M128 930L133 1000M150 950L143 895Q150 885 155 900L162 945L168 905Q175 890 175 910L170 950Q180 975 178 1010Q170 1050 150 1050Q130 1040 130 1000Q120 960 130 955Q145 950 148 975L145 990M133 1035Q130 1130 165 1180M178 1020L180 1120M180 1090Q210 1080 230 1110M285 1135Q300 1150 340 1190Q370 1180 390 1145M272 990Q285 1010 283 1035M375 980L437 970L420 1015L437 1045L378 1058M375 980L388 1150
M490 1100Q490 950 555 948Q615 970 620 1100Q618 1180 610 1198M610 1000Q650 960 652 985Q645 1050 515 1190M490 1150L462 1198M522 1035Q530 1095 548 1093Q575 1085 573 1028M650 1115L687 1130L683 1190M650 1115L645 1190M662 1112Q665 1075 673 1078Q682 1090 680 1125M748 1032Q760 1040 773 1062L752 1100ZM690 962L707 968L703 1008L685 1000ZM755 880L770 850L768 825L783 845V860M755 880L765 895L755 920L770 930L785 920
M835 500L862 530L860 545M835 500L832 545M955 478Q950 510 960 545M955 478Q945 510 922 520L935 545`},
{y:1920, e:[[392,55,17,48],[1121,840,15,40],[1121,840,6,16],[1204,590,19,42],[1252,615,24,56],[1288,685,18,42],[793,1010,70,122],[730,820,18,45],[1380,1110,50,130],[20,987,2,5],[44,982,2,5],[65,1008,2,5]], r:[],
 t:[['A',792,655,76,1.2,6],['1:13',893,655,58,.95,10],['***',960,985,50,.95,-8]],
 d:[[87,322,17],[7,70,13],[232,383,13],[392,395,13],[90,429,8],[829,479,8],[946,470,8],[1023,405,8],[1077,447,17],[1279,409,8],[1251,476,13],[1189,508,8],[1053,600,13],[1134,623,8],[1325,607,8],[1336,727,8],[1206,829,8],[1010,770,8],[783,715,8],[855,704,8],[615,790,8],[648,730,13],[65,704,8],[17,760,8],[1478,853,13],[1410,940,8],[1444,949,13],[1061,1035,8],[1106,1097,18],[1248,1075,8],[1465,1056,8],[149,1050,13],[357,1075,13],[1503,70,13]],
 p:`M10 150Q10 110 35 120Q55 50 85 30Q120 20 150 55L170 100V60M70 90L35 120M70 90Q100 110 105 155Q90 190 60 220Q45 250 30 245Q15 230 10 150M45 160L35 230M105 150L125 170Q120 110 155 115Q200 130 242 215M125 170V295L135 380L118 435M177 200L187 240V375L175 435M130 305Q155 335 187 280M187 265Q200 300 230 290Q275 250 285 145M277 115Q285 165 330 165Q370 150 385 105M285 5Q310 55 335 50Q375 40 378 0
M190 20Q200-5 235 0Q248 20 247 50Q240 90 225 92L195 70Q185 50 190 20M400 130L405 165L425 130V175L453 180L440 215L455 240L435 250L430 305L413 275L400 312L395 270L378 268L390 235L375 210L392 200L378 180L395 180ZM402 222L410 240L430 212
M285 320Q290 240 320 245Q355 255 355 300Q350 360 330 380Q315 420 295 405Q275 390 285 320M345 340Q325 340 320 370L325 400M420 435L460 330M515 328L518 435M462 85Q460 40 490 20Q520 20 515 40L462 85M520 30L560 0
M545 400Q575 340 625 335Q690 340 708 385Q660 390 625 335Q600 400 545 400M570 380L595 350M655 350L680 370M600 380L592 435M612 380L610 435M625 340V435M635 360L645 430M645 370L660 430
M815 330L820 410H985L978 330M875 328L860 370L880 375L860 400M978 335L920 370L890 405M820 20L830 45M850 20Q855 0 875 25M900 20Q920 0 925 45M960 20Q985 0 990 45M1090 45Q1110 20 1140 15M1220 45L1200 15
M1118 328Q1130 440 1190 443Q1240 430 1247 328M1145 328Q1150 400 1185 443M1200 328L1165 430M1225 328Q1225 400 1195 440M1170 328Q1165 380 1165 430M1155 450Q1145 520 1090 560V600Q1140 590 1150 490ZM1155 450L1140 435
M1370 328L1400 440M1340 328L1350 440M1395 328Q1420 350 1430 390Q1405 390 1390 345M1355 360Q1330 350 1330 328M1300 490Q1310 455 1345 450M1300 490L1330 495L1310 540Q1340 510 1350 460
M740 415Q750 430 757 450L785 430Q793 440 785 455L772 480L785 600M740 415L760 560M890 540Q895 510 915 518L1000 540Q1020 550 1020 590L1015 670Q1008 700 990 695L900 660Q880 650 882 610ZM975 535Q985 505 1000 525V540M900 665Q895 690 905 695L990 715Q1000 710 995 695M868 495L880 515M887 463L893 500M862 542L877 547
M1055 710Q1080 660 1100 662Q1180 720 1190 920L1155 1035Q1130 1020 1090 940Q1040 800 1055 710ZM1185 920L1140 1015M1190 945L1150 1030M1190 985L1195 970L1218 1005L1205 985M1178 1000L1170 1020M1120 775V800M1120 885V910M1090 840H1100M1140 835H1150M1100 795L1105 810M1140 795L1135 810M1095 880L1103 865M1145 880L1138 865
M1155 670Q1155 630 1185 630Q1205 640 1210 655M1175 670Q1180 640 1210 655L1235 680Q1250 650 1270 715L1298 790Q1295 830 1285 833L1190 755Q1165 720 1155 670M1190 755Q1170 690 1195 665Q1215 680 1220 700Q1215 730 1190 755M805 850L825 765L842 785L825 862L792 820ZM825 765L828 735H838V780M943 735Q948 765 968 772Q950 790 950 825Q945 790 925 785Q945 765 943 735Z
M948 900Q950 880 965 875L1030 853Q1045 860 1047 890V960Q1045 985 1035 990L975 1018Q960 1015 955 990ZM870 850L905 855L900 930L865 915ZM880 850Q885 810 893 815Q900 830 897 852M1213 885L1262 868Q1250 910 1250 955L1230 905Q1215 900 1213 885M1370 810L1300 920Q1295 945 1303 945L1385 812M1400 812L1285 990Q1283 1015 1292 1012L1445 810M1380 870L1395 895
M575 960L640 1050Q660 1000 690 1005Q735 1040 740 1140M640 1045L628 1075M665 970L660 1010M578 955Q600 850 660 830L675 845Q690 880 705 895Q715 895 720 870L755 915M680 725Q670 760 685 780Q670 810 678 840M715 700Q725 690 735 700Q750 710 745 750Q720 740 715 780Q700 790 690 770M745 755Q755 800 740 810M763 1015Q768 955 780 1015M810 1030Q820 970 828 1028M750 1035Q760 1120 795 1120Q835 1115 840 1060M835 1080L855 1140
M572 1140Q570 1050 575 960M585 712Q590 760 570 820M548 715L555 760L550 780M560 900L570 920L562 930M545 1020Q560 1060 545 1140M885 1010L895 1015L900 990L915 1005L918 1025L940 1020L930 1055L938 1075L925 1070L920 1105L908 1080L890 1075L895 1050L882 1035Z
M975 1060Q980 1050 995 1075Q1030 1070 1040 1110L1045 1140M975 1060L978 1140M1015 1080Q1020 1110 1010 1140M1182 1040L1195 1075Q1210 1080 1208 1115Q1200 1140 1180 1135Q1160 1120 1165 1090L1180 1075ZM1280 1090Q1278 1065 1288 1075L1292 1100L1295 1065Q1302 1055 1303 1075L1302 1100Q1312 1070 1312 1085L1305 1140M1280 1090L1283 1115Q1265 1125 1258 1140
M1335 1050Q1360 1100 1430 1160M1335 1100Q1370 1040 1400 1040M1360 990Q1370 1050 1400 1045Q1420 1030 1428 1030M0 388Q60 380 70 490Q75 640 15 673Q-20 675-35 600Q-50 400 0 388M0 480L45 420M0 560L70 440M20 390L45 480Q60 560 35 660M0 610L50 500
M65 795Q40 830 38 860Q30 900 60 920Q90 925 107 935Q110 1080 60 1115Q20 1120 0 1070Q-25 1000-20 920Q20 900 60 920Q50 880 55 870M5 1030Q15 1010 20 1030M20 1080Q20 1040 38 1020Q50 1040 45 1085M45 1050Q60 1040 73 1045Q75 1090 45 1090Q20 1095 10 1060M0 270Q10 275 32 268Q22 300 30 348Q10 330 0 335
M105 712V745M250 712Q260 730 255 745M275 712L270 745M310 712Q315 740 335 730M410 745L415 730L420 745M440 745Q450 725 460 745M215 1023L235 1140M240 1023L230 1140M265 1023V1140M310 1023L325 1140M380 1023Q400 1070 445 1075M430 1023L445 1140M485 1140Q490 1080 523 1060M195 1080Q200 1060 205 1090`}
];
define('doodle-wallpaper', `<style>:host{display:block;position:absolute;inset:0;z-index:-1}svg{display:block}path,ellipse,rect{vector-effect:non-scaling-stroke}text{font-family:Inter,sans-serif}</style><div></div>`, (el, root) => {
  const S = 1170 / 1568;
  const oval = (x, y, rx, ry) => `<ellipse cx="${x}" cy="${y}" rx="${rx}" ry="${ry}"/>`;
  const ovals = b => b.e.concat(b.d.map(([x, y, r]) => [x, y, r, r * 2.24]));
  const band = (b, inner) => `<g transform="translate(0 ${b.y}) scale(${S} .33333)"><path d="${b.p}"/>${inner}</g>`;
  const main = bands.map(b =>
    band(b, ovals(b).map(a => oval(...a)).join('') +
      b.r.map(([x, y, w, h]) => `<rect x="${x}" y="${y}" width="${w}" height="${h}" rx="${w > 20 ? 11 : 1}" ry="${w > 20 ? 20 : 2}"/>`).join('')) +
    b.t.map(([s, x, y, size, , rot]) => `<text font-size="${size * .72}" transform="translate(${x * S} ${b.y + y / 3}) rotate(${rot || 0})" style="${rot === undefined ? 'fill:#262626;stroke:none' : 'stroke-width:2.5'}">${s}</text>`).join('')).join('');
  const wrap = bands.map(b => band(b, ovals(b).filter(a => a[0] < 110).map(a => oval(...a)).join(''))).join('');
  root.querySelector('div').innerHTML = `<svg width="1170" height="2030" viewBox="0 274 1170 2030" fill="none" stroke="#232323" stroke-width="3.4" stroke-linecap="round" stroke-linejoin="round">${main}<g transform="translate(1125 0)">${wrap}</g></svg>`;
});

define('chat-screen', `<style>
:host{display:flex;flex-direction:column;width:1170px;height:2532px;overflow:hidden}
.chat{position:relative;z-index:0;display:flex;flex-direction:column;height:2029px;overflow:hidden;background:#0a0a0a}
.prev{flex:none;align-self:flex-end;box-sizing:border-box;margin-right:54px;width:522px;height:16px;background:#144d37;border-radius:0 0 33px 33px/0 0 16px 16px;padding:0 18px}
.prev div{height:4px;background:#113b2b;border-radius:0 0 20px 20px/0 0 4px 4px}
big-heart{align-self:flex-end;flex:none;margin:84px 51px 0 0}
.photo{flex:none;margin:21px 0 0 97px;width:293px;height:40px;background:linear-gradient(90deg,#947472,#a07876 45%,#957674 75%,#a17878)}
heart-emoji{margin-left:5px;position:relative;top:-1px}
</style>
<chat-header></chat-header>
<div class="chat"><doodle-wallpaper></doodle-wallpaper>
<div class="prev"><div></div></div>
<chat-bubble sent near tail w="528" time="21:23"><fit-text w="306">I love you baby</fit-text></chat-bubble>
<chat-bubble tail w="513" time="21:24"><fit-text w="272">I love you too</fit-text><heart-emoji></heart-emoji></chat-bubble>
<big-heart></big-heart>
<time-pill></time-pill>
<chat-bubble sent lines w="861" style="margin-top:25px" time="21:25"><fit-text w="792">I want you to know i’m always proud of</fit-text><fit-text w="74">you</fit-text></chat-bubble>
<chat-bubble sent near tail w="633" time="21:26"><fit-text w="409">every single second</fit-text></chat-bubble>
<chat-bubble tail w="612" time="21:30"><fit-text w="433">Thank youuu my love</fit-text></chat-bubble>
<chat-bubble sent tail w="702" time="21:31"><fit-text w="478">i miss you already baby</fit-text></chat-bubble>
<chat-bubble tail w="522" time="21:49"><fit-text w="345">I miss you too ml</fit-text></chat-bubble>
<date-chip><fit-text w="220">22 Apr 2024</fit-text></date-chip>
<call-card></call-card>
<chat-bubble sent tail w="774" style="margin-top:10px" time="01:38"><fit-text w="489">Good night My Princess</fit-text><heart-emoji></heart-emoji></chat-bubble>
<chat-bubble w="519" time="01:38"><fit-text w="340">Good night baby</fit-text></chat-bubble>
<chat-bubble w="372" style="margin-top:10px" time="01:38"><fit-text w="193">I love you</fit-text></chat-bubble>
<div class="photo"></div>
<scroll-down></scroll-down>
</div>
<message-composer></message-composer>`);
</script>
</body>
</html>
